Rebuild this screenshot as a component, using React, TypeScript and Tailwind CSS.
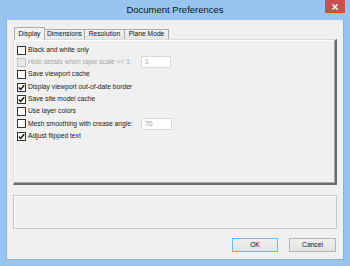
import React from "react";

const font = { fontFamily: '"Liberation Sans", Arial, sans-serif' };

function Check({ checked, disabled }: { checked?: boolean; disabled?: boolean }) {
  return (
    <div
      className={
        "w-[9px] h-[9px] shrink-0 border flex items-center justify-center " +
        (disabled ? "border-[#c6c6c6] bg-[#e8e8e8]" : "border-[#333333] bg-white")
      }
    >
      {checked && (
        <svg width="7" height="7" viewBox="0 0 7 7">
          <path d="M0.8 3.6 L2.7 5.5 L6.2 1.2" fill="none" stroke="#111" strokeWidth="1.4" />
        </svg>
      )}
    </div>
  );
}

function Row({
  label,
  checked,
  disabled,
  input,
  inputW,
}: {
  label: string;
  checked?: boolean;
  disabled?: boolean;
  input?: string;
  inputW?: string;
}) {
  return (
    <div className="h-[12.3px] flex items-center">
      <div className={input ? "w-[124px] flex items-center gap-[2px]" : "flex items-center gap-[2px]"}>
        <Check checked={checked} disabled={disabled} />
        <span className={"text-[6.7px] leading-none whitespace-nowrap " + (disabled ? "text-[#a6a6a6]" : "text-[#1a1a1a]")}>
          {label}
        </span>
      </div>
      {input && (
        <div className={"h-[12px] border border-[#d9d9d9] bg-white flex items-center pl-[3px] " + (inputW || "w-[30px]")}>
          <span className="text-[6.7px] leading-none text-[#9a9a9a]">{input}</span>
        </div>
      )}
    </div>
  );
}

export default function App() {
  return (
    <div className="w-[350px] h-[266px] bg-[#98c5ef] flex flex-col" style={font}>
      <div className="h-[20px] relative flex items-center justify-center shrink-0">
        <span className="text-[9.5px] text-[#111] leading-none">Document Preferences</span>
        <div className="absolute right-[5px] top-0 w-[20px] h-[13px] bg-[#c75050] flex items-center justify-center">
          <svg width="6" height="6" viewBox="0 0 6 6">
            <path d="M0.5 0.5 L5.5 5.5 M5.5 0.5 L0.5 5.5" stroke="#fff" strokeWidth="1.5" />
          </svg>
        </div>
      </div>
      <div className="mx-[6px] mb-[6px] flex-1 bg-[#f0f0f0] border-l border-r border-b border-[#86b3df] flex flex-col px-[6px] pt-[7px]">
        <div className="h-[12px] flex items-end pl-[2px] relative z-10">
          <div className="w-[31px] h-[12px] -ml-[1px] border border-b-0 border-[#acacac] bg-[#f0f0f0] flex items-center justify-center -mb-px h-[13px]">
            <span className="text-[6.7px] leading-none text-[#111]">Display</span>
          </div>
          <div className="w-[40px] h-[10px] border border-b-0 border-l-0 border-[#acacac] bg-gradient-to-b from-[#f2f2f2] to-[#e6e6e6] flex items-center justify-center">
            <span className="text-[6.7px] leading-none text-[#111]">Dimensions</span>
          </div>
          <div className="w-[40px] h-[10px] border border-b-0 border-l-0 border-[#acacac] bg-gradient-to-b from-[#f2f2f2] to-[#e6e6e6] flex items-center justify-center">
            <span className="text-[6.7px] leading-none text-[#111]">Resolution</span>
          </div>
          <div className="w-[44px] h-[10px] border border-b-0 border-l-0 border-[#acacac] bg-gradient-to-b from-[#f2f2f2] to-[#e6e6e6] flex items-center justify-center">
            <span className="text-[6.7px] leading-none text-[#111]">Plane Mode</span>
          </div>
        </div>
        <div className="h-[146px] w-[324px] border-t border-l border-t-[#dcdcdc] border-l-[#dcdcdc] border-r-2 border-b-2 border-r-[#6b6b6b] border-b-[#6b6b6b] shadow-[inset_-1px_-1px_0_#a8a8a8,inset_1px_1px_0_#ffffff] pl-[3px] pt-[4px] flex flex-col">
          <Row label="Black and white only" />
          <Row label="Hide details when layer scale <= 1:" disabled input="1" />
          <Row label="Save viewport cache" />
          <Row label="Display viewport out-of-date border" checked />
          <Row label="Save site model cache" checked />
          <Row label="Use layer colors" />
          <Row label="Mesh smoothing with crease angle:" input="70" inputW="w-[31px]" />
          <Row label="Adjust flipped text" checked />
        </div>
        <div className="mt-[10px] h-[34px] w-[324px] border border-[#c8c8c8] shadow-[inset_1px_1px_0_#ffffff] bg-[#f0f0f0]" />
        <div className="mt-[9px] flex justify-end gap-[11px] pr-[1px]">
          <div className="w-[46px] h-[14px] border border-[#7fb3e6] bg-gradient-to-b from-[#f0f0f0] to-[#e3e3e3] flex items-center justify-center">
            <span className="text-[6.7px] leading-none text-[#111]">OK</span>
          </div>
          <div className="w-[47px] h-[14px] border border-[#b5b5b5] bg-gradient-to-b from-[#f0f0f0] to-[#e3e3e3] flex items-center justify-center">
            <span className="text-[6.7px] leading-none text-[#111]">Cancel</span>
          </div>
        </div>
      </div>
    </div>
  );
}
